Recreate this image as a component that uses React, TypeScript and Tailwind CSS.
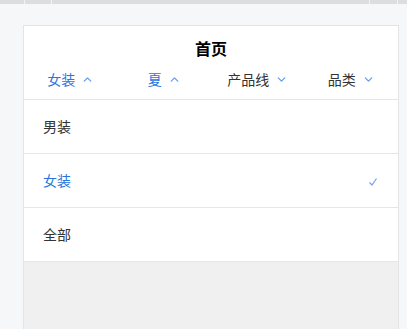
import { ChevronUp, ChevronDown } from 'lucide-react'

const tabs = [
  { label: '女装', active: true },
  { label: '夏', active: true },
  { label: '产品线', active: false },
  { label: '品类', active: false },
]

const options = [
  { label: '男装', selected: false },
  { label: '女装', selected: true },
  { label: '全部', selected: false },
]

export default function App() {
  return (
    <div
      className="w-[407px] h-[329px] bg-[#f6f7f8] flex flex-col overflow-hidden"
      style={{ fontFamily: '"Noto Sans CJK SC", "Noto Sans", sans-serif' }}
    >
      {/* browser strip */}
      <div className="h-[4px] bg-[#dddddd] flex shrink-0">
        <div className="w-[24px]" />
        <div className="w-px bg-[#f2f2f2]" />
        <div className="w-[26px]" />
        <div className="w-px bg-[#f2f2f2]" />
        <div className="w-[317px]" />
        <div className="w-px bg-[#f2f2f2]" />
        <div className="w-[27px]" />
        <div className="w-px bg-[#f2f2f2]" />
        <div className="flex-1" />
      </div>

      <div className="flex-1 pt-[21px] pl-[23px] flex">
        <div className="w-[376px] flex flex-col border-x border-t border-[#e4e4e4] bg-[#f0f0f0]">
          <div className="bg-white border-b border-[#e6e6e6] pb-[10px]">
            <div className="h-[43px] flex items-center justify-center">
              <span className="text-[16px] font-bold text-black leading-none">首页</span>
            </div>
            <div className="grid grid-cols-4 h-[20px] items-center">
              {tabs.map((t) => (
                <div key={t.label} className="flex items-center justify-center gap-[6px]">
                  <span
                    className={`text-[14px] leading-[18px] ${t.active ? 'text-[#2877e0]' : 'text-[#333333]'}`}
                  >
                    {t.label}
                  </span>
                  {t.active ? (
                    <ChevronUp className="w-[13px] h-[13px] text-[#6a9ef0]" strokeWidth={2.5} />
                  ) : (
                    <ChevronDown className="w-[13px] h-[13px] text-[#6a9ef0]" strokeWidth={2.5} />
                  )}
                </div>
              ))}
            </div>
          </div>

          {options.map((o) => (
            <div
              key={o.label}
              className="h-[54px] bg-white border-b border-[#e6e6e6] flex items-center justify-between pl-[19px] pr-[20px]"
            >
              <span className={`text-[14px] ${o.selected ? 'text-[#2877e0]' : 'text-[#333333]'}`}>
                {o.label}
              </span>
              {o.selected && (
                <svg width="10" height="10" viewBox="0 0 10 10" className="mt-[2px]">
                  <path d="M1.5 5.5 L4 8 L8.5 1.5" fill="none" stroke="#7aa4e8" strokeWidth="1.3" />
                </svg>
              )}
            </div>
          ))}
        </div>
      </div>
    </div>
  )
}
